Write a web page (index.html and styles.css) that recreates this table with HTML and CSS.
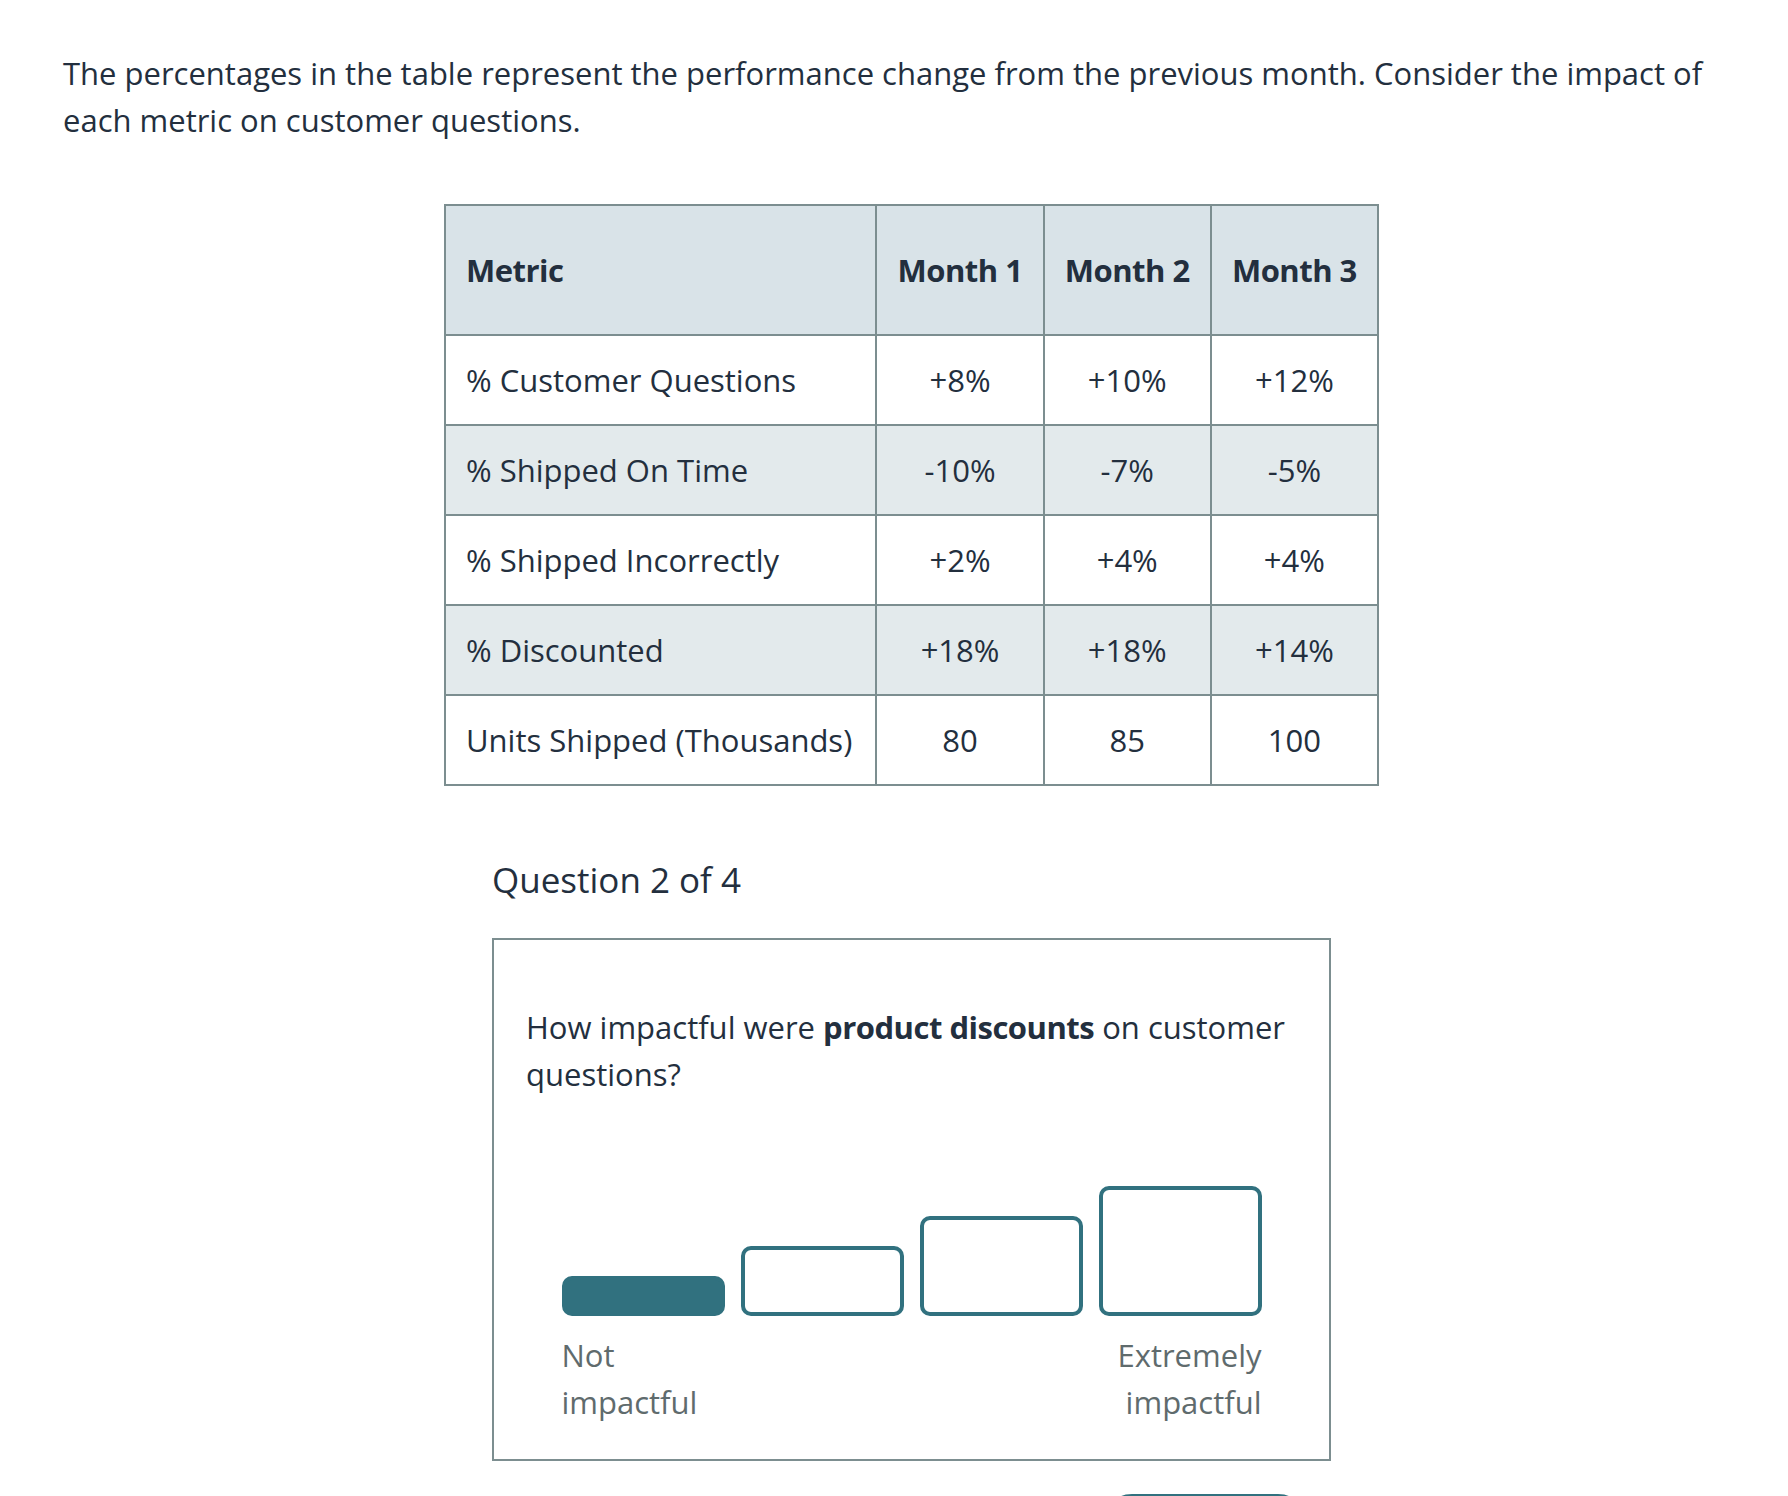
FILE: index.html
```html
<!DOCTYPE html>
<html lang="en">
<head>
<meta charset="utf-8">
<title>Question 2 of 4</title>
<link rel="stylesheet" href="styles.css">
</head>
<body>
<main class="page">
  <p class="intro">The percentages in the table represent the performance change from the previous month. Consider the impact of each metric on customer questions.</p>

  <table class="metrics">
    <thead>
      <tr>
        <th class="col-metric">Metric</th>
        <th class="col-month">Month 1</th>
        <th class="col-month">Month 2</th>
        <th class="col-month">Month 3</th>
      </tr>
    </thead>
    <tbody>
      <tr>
        <td class="col-metric">% Customer Questions</td>
        <td class="col-month">+8%</td>
        <td class="col-month">+10%</td>
        <td class="col-month">+12%</td>
      </tr>
      <tr class="alt">
        <td class="col-metric">% Shipped On Time</td>
        <td class="col-month">-10%</td>
        <td class="col-month">-7%</td>
        <td class="col-month">-5%</td>
      </tr>
      <tr>
        <td class="col-metric">% Shipped Incorrectly</td>
        <td class="col-month">+2%</td>
        <td class="col-month">+4%</td>
        <td class="col-month">+4%</td>
      </tr>
      <tr class="alt">
        <td class="col-metric">% Discounted</td>
        <td class="col-month">+18%</td>
        <td class="col-month">+18%</td>
        <td class="col-month">+14%</td>
      </tr>
      <tr>
        <td class="col-metric">Units Shipped (Thousands)</td>
        <td class="col-month">80</td>
        <td class="col-month">85</td>
        <td class="col-month">100</td>
      </tr>
    </tbody>
  </table>

  <section class="question">
    <h2 class="q-title">Question 2 of 4</h2>
    <div class="q-card">
      <p class="q-text">How impactful were <strong>product discounts</strong> on customer questions?</p>
      <div class="scale">
        <div class="bars">
          <button class="bar bar-1 selected" aria-label="Not impactful"></button>
          <button class="bar bar-2" aria-label="Slightly impactful"></button>
          <button class="bar bar-3" aria-label="Very impactful"></button>
          <button class="bar bar-4" aria-label="Extremely impactful"></button>
        </div>
        <div class="labels">
          <span class="label label-left">Not impactful</span>
          <span class="label label-right">Extremely impactful</span>
        </div>
      </div>
    </div>
    <div class="actions">
      <button class="next" aria-label="Next"></button>
    </div>
  </section>
</main>
</body>
</html>
```
FILE: styles.css
```css
html, body {
  margin: 0;
  padding: 0;
  background: #ffffff;
}

body {
  font-family: "Open Sans", "Noto Sans", sans-serif;
  font-size: 31px;
  line-height: 47px;
  color: #232f3e;
}

.page {
  padding: 50px 28px 0 63px;
  display: flex;
  flex-direction: column;
  align-items: center;
}

.intro {
  margin: 0;
  align-self: stretch;
}

.metrics {
  margin-top: 60px;
  width: 935px;
  table-layout: fixed;
  border-collapse: separate;
  border-spacing: 0;
  border-top: 2px solid #7c8e90;
  border-left: 2px solid #7c8e90;
}

.metrics th,
.metrics td {
  box-sizing: border-box;
  border-right: 2px solid #7c8e90;
  border-bottom: 2px solid #7c8e90;
  padding: 0 20px;
  vertical-align: middle;
  font-size: 31px;
  line-height: 47px;
}

.metrics th {
  height: 130px;
  background: #d9e3e8;
  font-weight: 700;
  letter-spacing: -0.5px;
}

.metrics td {
  height: 90px;
  font-weight: 400;
}

.metrics tr.alt td {
  background: #e3eaec;
}

.col-metric {
  width: 431px;
  text-align: left;
}

.col-month {
  width: 167px;
  text-align: center;
  padding: 0 !important;
}

.question {
  width: 839px;
  margin-top: 70px;
}

.q-title {
  margin: 0;
  font-size: 35px;
  line-height: 48px;
  font-weight: 400;
}

.q-card {
  margin-top: 34px;
  border: 2px solid #7c8e90;
  padding: 64px 32px 33px;
}

.q-text {
  margin: 0;
}

.q-text strong {
  font-weight: 700;
  letter-spacing: -0.5px;
}

.scale {
  width: 700px;
  margin: 88px auto 0;
}

.bars {
  display: grid;
  grid-template-columns: repeat(4, 1fr);
  column-gap: 16px;
  align-items: end;
  height: 130px;
}

.bar {
  box-sizing: border-box;
  border: 4px solid #31717f;
  border-radius: 10px;
  background: #ffffff;
  padding: 0;
  margin: 0;
  cursor: pointer;
}

.bar.selected {
  background: #31717f;
}

.bar-1 { height: 40px; }
.bar-2 { height: 70px; }
.bar-3 { height: 100px; }
.bar-4 { height: 130px; }

.labels {
  display: grid;
  grid-template-columns: repeat(4, 1fr);
  column-gap: 16px;
  margin-top: 16px;
  color: #5f6b6d;
}

.label-left {
  grid-column: 1;
  text-align: left;
}

.label-right {
  grid-column: 4;
  text-align: right;
}

.actions {
  display: flex;
  justify-content: flex-end;
  padding: 33px 21px 40px 0;
}

.next {
  width: 210px;
  height: 64px;
  border: none;
  border-radius: 32px;
  background: #31717f;
}
```
